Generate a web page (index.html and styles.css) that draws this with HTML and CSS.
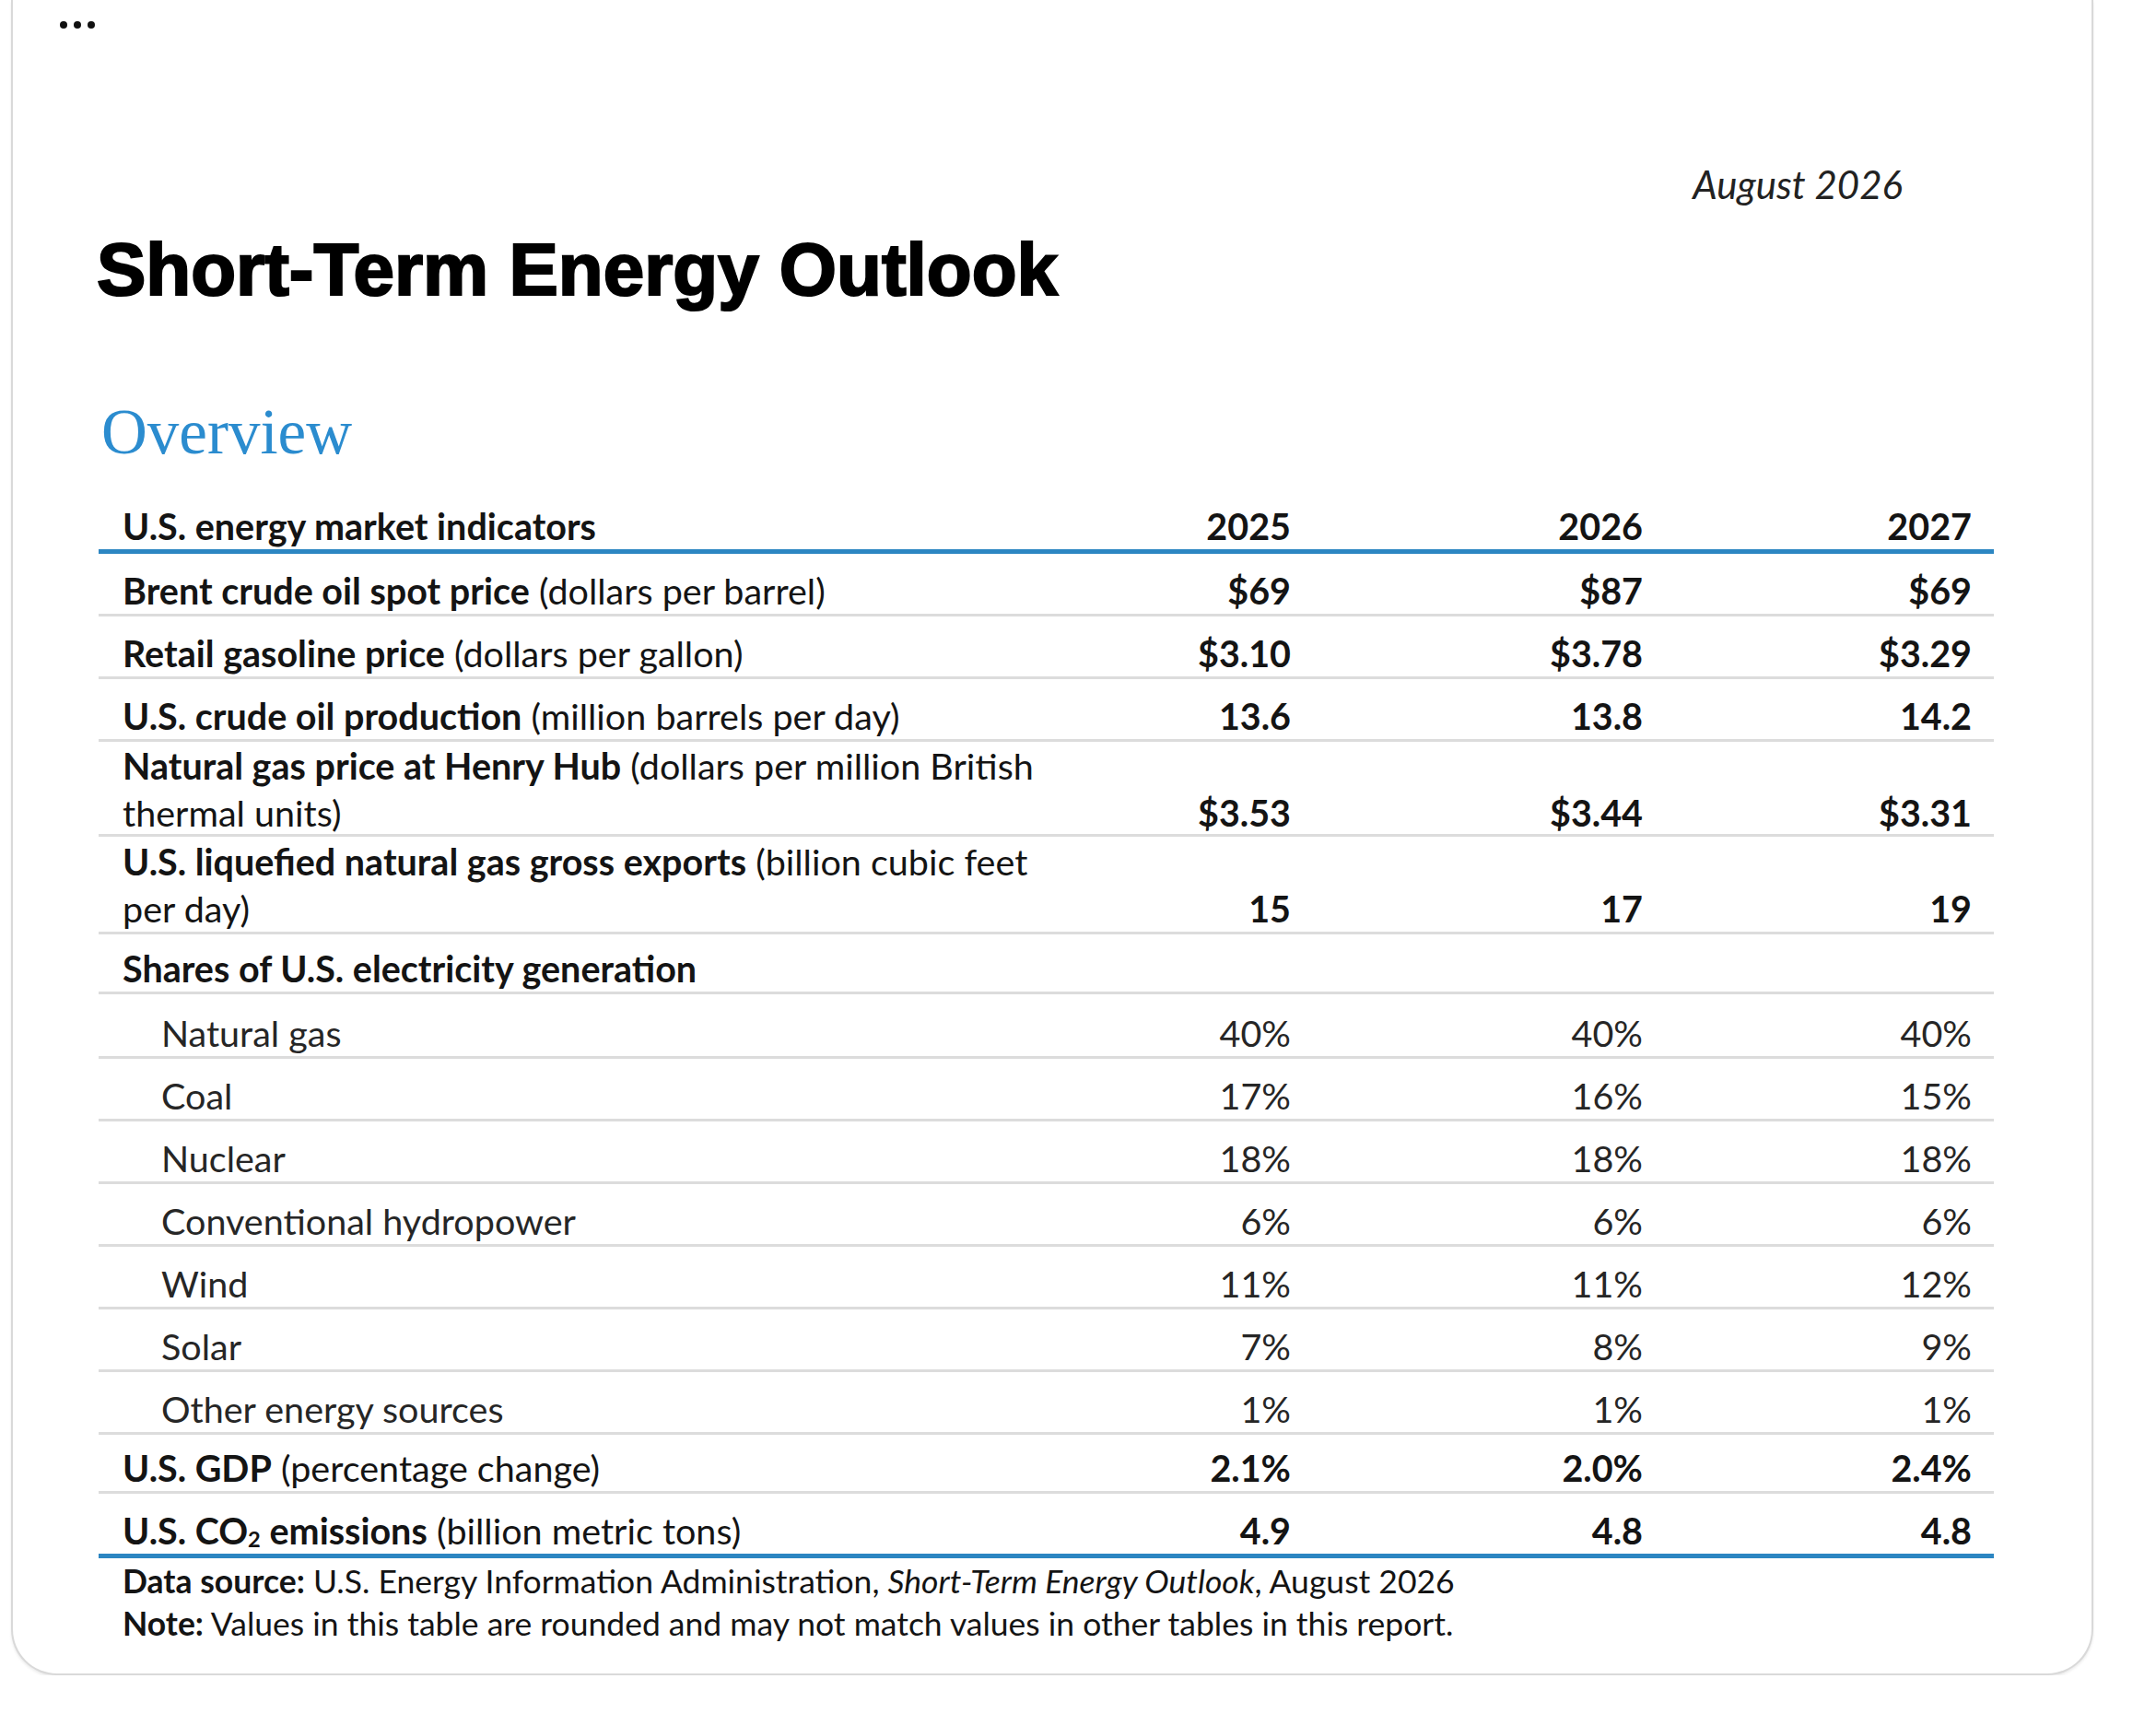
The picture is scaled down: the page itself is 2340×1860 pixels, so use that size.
FILE: index.html
```html
<!DOCTYPE html>
<html lang="en">
<head>
<meta charset="utf-8">
<title>Short-Term Energy Outlook</title>
<link rel="stylesheet" href="styles.css">
</head>
<body>
<div class="card">
  <div class="more" aria-label="More"><span></span><span></span><span></span></div>
  <div class="date">August 2026</div>
  <h1 class="title">Short-Term Energy Outlook</h1>
  <h2 class="overview">Overview</h2>
  <div class="table">
    <div class="row head">
      <div class="label"><b>U.S. energy market indicators</b></div>
      <div class="val">2025</div><div class="val">2026</div><div class="val">2027</div>
    </div>
    <div class="row">
      <div class="label"><b>Brent crude oil spot price</b> (dollars per barrel)</div>
      <div class="val">$69</div><div class="val">$87</div><div class="val">$69</div>
    </div>
    <div class="row">
      <div class="label"><b>Retail gasoline price</b> (dollars per gallon)</div>
      <div class="val">$3.10</div><div class="val">$3.78</div><div class="val">$3.29</div>
    </div>
    <div class="row">
      <div class="label"><b>U.S. crude oil production</b> (million barrels per day)</div>
      <div class="val">13.6</div><div class="val">13.8</div><div class="val">14.2</div>
    </div>
    <div class="row tall">
      <div class="label"><b>Natural gas price at Henry Hub</b> (dollars per million British<br>thermal units)</div>
      <div class="val">$3.53</div><div class="val">$3.44</div><div class="val">$3.31</div>
    </div>
    <div class="row taller">
      <div class="label"><b>U.S. liquefied natural gas gross exports</b> (billion cubic feet<br>per day)</div>
      <div class="val">15</div><div class="val">17</div><div class="val">19</div>
    </div>
    <div class="row group">
      <div class="label"><b>Shares of U.S. electricity generation</b></div>
      <div class="val"></div><div class="val"></div><div class="val"></div>
    </div>
    <div class="row sub high">
      <div class="label">Natural gas</div>
      <div class="val">40%</div><div class="val">40%</div><div class="val">40%</div>
    </div>
    <div class="row sub">
      <div class="label">Coal</div>
      <div class="val">17%</div><div class="val">16%</div><div class="val">15%</div>
    </div>
    <div class="row sub">
      <div class="label">Nuclear</div>
      <div class="val">18%</div><div class="val">18%</div><div class="val">18%</div>
    </div>
    <div class="row sub">
      <div class="label">Conventional hydropower</div>
      <div class="val">6%</div><div class="val">6%</div><div class="val">6%</div>
    </div>
    <div class="row sub">
      <div class="label">Wind</div>
      <div class="val">11%</div><div class="val">11%</div><div class="val">12%</div>
    </div>
    <div class="row sub">
      <div class="label">Solar</div>
      <div class="val">7%</div><div class="val">8%</div><div class="val">9%</div>
    </div>
    <div class="row sub">
      <div class="label">Other energy sources</div>
      <div class="val">1%</div><div class="val">1%</div><div class="val">1%</div>
    </div>
    <div class="row short">
      <div class="label"><b>U.S. GDP</b> (percentage change)</div>
      <div class="val">2.1%</div><div class="val">2.0%</div><div class="val">2.4%</div>
    </div>
    <div class="row last">
      <div class="label"><b>U.S. CO<sub>2</sub> emissions</b> (billion metric tons)</div>
      <div class="val">4.9</div><div class="val">4.8</div><div class="val">4.8</div>
    </div>
  </div>
  <div class="notes">
    <p><b>Data source:</b> U.S. Energy Information Administration, <i>Short-Term Energy Outlook</i>, August 2026</p>
    <p><b>Note:</b> Values in this table are rounded and may not match values in other tables in this report.</p>
  </div>
</div>
</body>
</html>
```

FILE: styles.css
```css
* { box-sizing: border-box; }

body {
  margin: 0;
  background: #ffffff;
  color: #141414;
  font-family: Lato, "Open Sans", sans-serif;
}

.card {
  margin-left: 12px;
  width: 2260px;
  height: 1818px;
  border: 2px solid #d9d9d9;
  border-top: none;
  border-radius: 0 0 50px 50px;
  box-shadow: 0 2px 3px rgba(0, 0, 0, 0.08);
  background: #ffffff;
}

.more {
  display: flex;
  gap: 7px;
  padding: 23px 0 0 51px;
}

.more span {
  width: 8px;
  height: 8px;
  border-radius: 50%;
  background: #111;
}

.date {
  margin-top: 144px;
  height: 50px;
  line-height: 50px;
  text-align: right;
  padding-right: 205px;
  font-style: italic;
  font-size: 42px;
  color: #222;
}

.title {
  margin: 20px 0 0 91px;
  font: 700 80px/96px "Liberation Sans", Arial, sans-serif;
  -webkit-text-stroke: 2.2px #000;
  color: #000;
}

.overview {
  margin: 88px 0 0 96px;
  font: 400 69px/80px "Liberation Serif", "Times New Roman", serif;
  color: #2b8ccf;
}

.table {
  margin-left: 93px;
  width: 2057px;
  font-size: 39.5px;
}

.row {
  display: grid;
  grid-template-columns: 1033px 285px 382px 357px;
  align-items: end;
  height: 68px;
  line-height: 50px;
  border-bottom: 3px solid #dcdcdc;
}

.row.head {
  height: 92px;
  border-bottom: 5px solid #2c86c2;
  font-weight: 700;
}

.row.tall { height: 103px; }
.row.taller { height: 106px; }
.row.group { height: 65px; }
.row.high { height: 70px; }
.row.short { height: 64px; }

.row.tall .label,
.row.taller .label {
  line-height: 51px;
}

.row.last {
  height: 70px;
  border-bottom: 5px solid #2c86c2;
}

.label {
  padding-left: 26px;
}

.row.sub .label {
  padding-left: 68px;
  color: #262626;
}

.val {
  text-align: right;
  padding-right: 24px;
  font-weight: 700;
}

.row.sub .val {
  font-weight: 400;
  color: #262626;
}

.label b { font-weight: 700; }

sub {
  font-size: 0.6em;
  line-height: 0;
  vertical-align: -0.12em;
}

.notes {
  margin: 2px 0 0 119px;
  font-size: 35.5px;
  line-height: 46px;
}

.notes p { margin: 0; }
```
